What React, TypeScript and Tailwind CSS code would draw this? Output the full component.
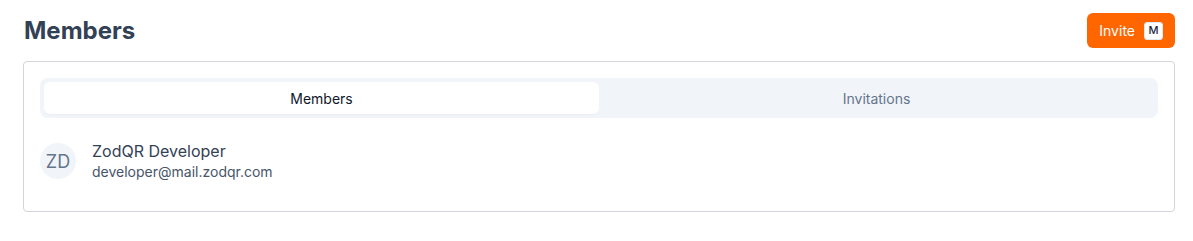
const App: React.FC = () => {
  return (
    <div className="min-h-[241px] bg-white pl-[23px] pr-[18px] pt-[13px] font-['Inter',sans-serif]">
      <div className="flex items-center justify-between">
        <h1 className="pl-px text-[24px] font-bold leading-[35px] text-[#334155]">Members</h1>
        <button className="flex h-[35px] items-center gap-[9px] rounded-md bg-[#ff6600] pl-[12px] pr-[12px] text-[14px] text-white">
          Invite
          <span className="flex h-[18px] w-[19px] items-center justify-center rounded-[3px] border border-[#e2e8f0] bg-white text-[11px] font-medium text-[#1e293b]">
            M
          </span>
        </button>
      </div>

      <div className="mt-[13px] rounded border border-[#d1d5db] px-[16px] pt-[16px] pb-[29px]">
        <div className="grid grid-cols-2 rounded-lg bg-[#f1f5f9] p-1">
          <div className="flex h-[32px] items-center justify-center rounded-md bg-white text-[14px] text-[#0f172a] shadow-[0_1px_1px_rgba(0,0,0,0.03)]">
            Members
          </div>
          <div className="flex h-[32px] items-center justify-center text-[14px] text-[#64748b]">Invitations</div>
        </div>

        <div className="mt-[22px] flex items-center gap-[16px]">
          <div className="flex h-[36px] w-[36px] items-center justify-center rounded-full bg-[#f1f5f9] text-[18px] text-[#64748b]">
            ZD
          </div>
          <div className="flex flex-col">
            <span className="text-[16px] leading-[22px] text-[#334155]">ZodQR Developer</span>
            <span className="text-[14px] leading-[20px] text-[#475569]">developer@mail.zodqr.com</span>
          </div>
        </div>
      </div>
    </div>
  );
};

export default App;
